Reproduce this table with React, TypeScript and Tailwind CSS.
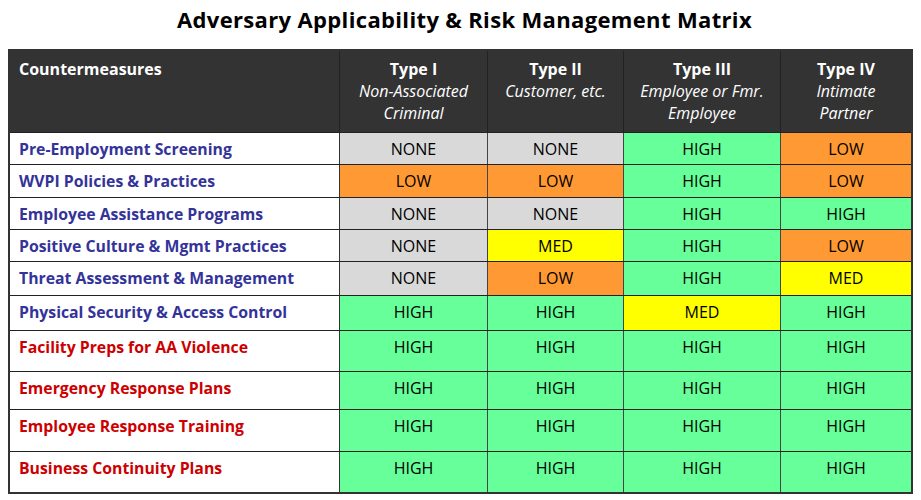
import React from "react";

type Lvl = "NONE" | "LOW" | "MED" | "HIGH";

const bg: Record<Lvl, string> = {
  NONE: "bg-[#d9d9d9]",
  LOW: "bg-[#ff9933]",
  MED: "bg-[#ffff00]",
  HIGH: "bg-[#66ff99]",
};

const rows: { label: string; red: boolean; h: string; v: Lvl[] }[] = [
  { label: "Pre-Employment Screening", red: false, h: "h-[32px]", v: ["NONE", "NONE", "HIGH", "LOW"] },
  { label: "WVPI Policies & Practices", red: false, h: "h-[33px]", v: ["LOW", "LOW", "HIGH", "LOW"] },
  { label: "Employee Assistance Programs", red: false, h: "h-[32px]", v: ["NONE", "NONE", "HIGH", "HIGH"] },
  { label: "Positive Culture & Mgmt Practices", red: false, h: "h-[32px]", v: ["NONE", "MED", "HIGH", "LOW"] },
  { label: "Threat Assessment & Management", red: false, h: "h-[34px]", v: ["NONE", "LOW", "HIGH", "MED"] },
  { label: "Physical Security & Access Control", red: false, h: "h-[35px]", v: ["HIGH", "HIGH", "MED", "HIGH"] },
  { label: "Facility Preps for AA Violence", red: true, h: "h-[41px]", v: ["HIGH", "HIGH", "HIGH", "HIGH"] },
  { label: "Emergency Response Plans", red: true, h: "h-[38px]", v: ["HIGH", "HIGH", "HIGH", "HIGH"] },
  { label: "Employee Response Training", red: true, h: "h-[42px]", v: ["HIGH", "HIGH", "HIGH", "HIGH"] },
  { label: "Business Continuity Plans", red: true, h: "h-[40px]", v: ["HIGH", "HIGH", "HIGH", "HIGH"] },
];

const colW = ["w-[148px]", "w-[136px]", "w-[157px]", "w-[130px]"];

const heads: { t: string; s: string[] }[] = [
  { t: "Type I", s: ["Non-Associated", "Criminal"] },
  { t: "Type II", s: ["Customer, etc."] },
  { t: "Type III", s: ["Employee or Fmr.", "Employee"] },
  { t: "Type IV", s: ["Intimate", "Partner"] },
];

export default function App() {
  return (
    <div
      className="w-[921px] h-[500px] bg-white text-black"
      style={{ fontFamily: '"Open Sans", "Noto Sans", sans-serif' }}
    >
      <div className="h-[49px] flex justify-center pt-[5px] pl-[8px]">
        <div className="text-[22px] leading-[28px] font-bold tracking-[0.35px]">
          Adversary Applicability &amp; Risk Management Matrix
        </div>
      </div>
      <div className="ml-[8px] w-[905px] border-2 border-[#333333]">
        <div className="flex h-[82px] bg-[#333333] text-white border-b border-[#222222]">
          <div className="w-[330px] border-r border-[#222222] pl-[9px] pt-[7px] text-[16px] leading-[22px] font-bold">
            Countermeasures
          </div>
          {heads.map((h, i) => (
            <div
              key={h.t}
              className={`${colW[i]} ${i < 3 ? "border-r border-[#222222]" : ""} flex flex-col items-center pt-[7px] text-[16px] leading-[22px]`}
            >
              <div className="font-bold">{h.t}</div>
              {h.s.map((s) => (
                <div key={s} className="italic">
                  {s}
                </div>
              ))}
            </div>
          ))}
        </div>
        {rows.map((r, ri) => (
          <div
            key={r.label}
            className={`flex ${r.h} ${ri < rows.length - 1 ? "border-b border-[#222222]" : ""}`}
          >
            <div
              className={`w-[330px] border-r border-[#333333] pl-[9px] pt-[5px] text-[15.8px] leading-[22px] font-bold ${
                r.red ? "text-[#cc0000]" : "text-[#333399]"
              }`}
            >
              {r.label}
            </div>
            {r.v.map((v, i) => (
              <div
                key={i}
                className={`${colW[i]} ${bg[v]} ${i < 3 ? "border-r border-[#444444]" : ""} flex justify-center pt-[5px] text-[16px] leading-[22px]`}
              >
                {v}
              </div>
            ))}
          </div>
        ))}
      </div>
    </div>
  );
}
